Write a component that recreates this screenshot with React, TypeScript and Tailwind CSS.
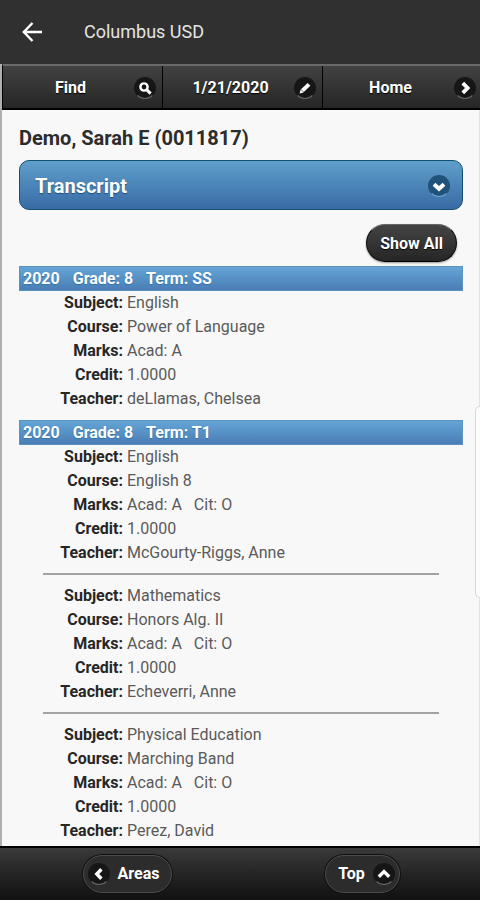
import type { ReactNode } from 'react'

interface CourseRecord {
  subject: string
  course: string
  marks: string[]
  credit: string
  teacher: string
}

interface Term {
  year: string
  grade: string
  term: string
  records: CourseRecord[]
}

const TERMS: Term[] = [
  {
    year: '2020',
    grade: '8',
    term: 'SS',
    records: [
      {
        subject: 'English',
        course: 'Power of Language',
        marks: ['Acad: A'],
        credit: '1.0000',
        teacher: 'deLlamas, Chelsea',
      },
    ],
  },
  {
    year: '2020',
    grade: '8',
    term: 'T1',
    records: [
      {
        subject: 'English',
        course: 'English 8',
        marks: ['Acad: A', 'Cit: O'],
        credit: '1.0000',
        teacher: 'McGourty-Riggs, Anne',
      },
      {
        subject: 'Mathematics',
        course: 'Honors Alg. II',
        marks: ['Acad: A', 'Cit: O'],
        credit: '1.0000',
        teacher: 'Echeverri, Anne',
      },
      {
        subject: 'Physical Education',
        course: 'Marching Band',
        marks: ['Acad: A', 'Cit: O'],
        credit: '1.0000',
        teacher: 'Perez, David',
      },
    ],
  },
]

const ICON_PATHS = {
  search: (
    <>
      <circle cx="8" cy="8" r="3.6" strokeWidth="2.4" />
      <path d="M10.6 10.6 14.6 14.6" strokeWidth="3" />
    </>
  ),
  edit: (
    <>
      <path d="M6.4 11.6 13 5.4" strokeWidth="4" />
      <path d="M3.6 14.6 4.6 10.6 7.6 13.6Z" fill="currentColor" stroke="none" />
    </>
  ),
  left: <path d="M11.4 4.2 6.8 9 11.4 13.8" strokeWidth="3.4" />,
  right: <path d="M6.8 4.2 11.6 9 6.8 13.8" strokeWidth="3.8" />,
  up: <path d="M3.8 11.8 9 6.6 14.2 11.8" strokeWidth="3.4" />,
  down: <path d="M4 7.2 9 11.8 14 7.2" strokeWidth="4" />,
}

function RoundIcon({ name, className = 'bg-[#161616] border-b-[#666]' }: { name: keyof typeof ICON_PATHS; className?: string }) {
  return (
    <span className={`flex size-[22px] shrink-0 items-center justify-center rounded-full border border-transparent ${className}`}>
      <svg className="size-[18px] text-white" viewBox="0 0 18 18" fill="none" stroke="currentColor" aria-hidden="true">
        {ICON_PATHS[name]}
      </svg>
    </span>
  )
}

function NavButton({ label, icon }: { label: string; icon: keyof typeof ICON_PATHS }) {
  return (
    <button className="flex h-full flex-1 items-center border-r border-black bg-linear-to-b from-[#424242] to-[#262626] pt-[2px] pr-[6px] pl-1 last:border-r-0 last:pr-1">
      <span className="flex-1 text-center [text-shadow:0_1px_1px_#000]">{label}</span>
      <RoundIcon name={icon} />
    </button>
  )
}

function Field({ label, children }: { label: string; children: ReactNode }) {
  return (
    <div className="flex gap-1">
      <dt className="w-[104px] shrink-0 text-right font-bold text-[#262626]">{label}:</dt>
      <dd className="flex gap-3 text-[#5a5a5a]">{children}</dd>
    </div>
  )
}

function Course({ record }: { record: CourseRecord }) {
  return (
    <dl className="text-base leading-6">
      <Field label="Subject">{record.subject}</Field>
      <Field label="Course">{record.course}</Field>
      <Field label="Marks">
        {record.marks.map((mark) => (
          <span key={mark}>{mark}</span>
        ))}
      </Field>
      <Field label="Credit">{record.credit}</Field>
      <Field label="Teacher">{record.teacher}</Field>
    </dl>
  )
}

function TermSection({ term }: { term: Term }) {
  return (
    <section>
      <h3 className="flex h-[25px] items-center gap-[13px] border border-[#5b93c0] bg-linear-to-b from-[#64a5d6] to-[#4a7db5] px-[3px] text-base font-bold text-white [text-shadow:0_1px_1px_#3373a5]">
        <span>{term.year}</span>
        <span>Grade: {term.grade}</span>
        <span>Term: {term.term}</span>
      </h3>
      {term.records.map((record, i) => (
        <div key={record.subject}>
          {i > 0 && <hr className="mx-6 mt-2 mb-[9px] border-t-2 border-[#a3a3a3]" />}
          <Course record={record} />
        </div>
      ))}
    </section>
  )
}

export default function App() {
  return (
    <div className="relative flex min-h-screen flex-col bg-[#f8f8f8] font-[Roboto,sans-serif]">
      {/* App bar */}
      <header className="flex h-16 shrink-0 items-center gap-10 bg-[#303030] px-5">
        <button aria-label="Back" className="text-white">
          <svg className="size-6" viewBox="0 0 24 24" fill="none" stroke="currentColor" strokeWidth="2.4" aria-hidden="true">
            <path d="M22 12H4.5M12.5 3 3.8 12l8.7 9" />
          </svg>
        </button>
        <h1 className="text-lg text-[#e4e4e4]">Columbus USD</h1>
      </header>

      <div className="flex flex-1 flex-col border-l-2 border-[#b0b0b0]">
        <nav className="flex h-[46px] shrink-0 border-t-2 border-b-2 border-t-[#6a6a6a] border-b-black border-l border-l-black text-base font-bold text-white">
          <NavButton label="Find" icon="search" />
          <NavButton label="1/21/2020" icon="edit" />
          <NavButton label="Home" icon="right" />
        </nav>

        <main className="flex-1 border-r border-[#e2e2e2] pr-4 pl-[17px]">
          <h2 className="mt-4 text-xl leading-6 font-bold text-[#2c2c2c]">Demo, Sarah E (0011817)</h2>

          <button className="mt-[10px] flex h-[50px] w-full items-center justify-between rounded-[10px] border border-[#145072] bg-linear-to-b from-[#5f9fcb] to-[#396ba5] pt-[2px] pr-3 pl-[15px] text-xl font-bold text-white [text-shadow:0_1px_1px_#194b7e]">
            Transcript
            <RoundIcon name="down" className="bg-[#20527c] border-b-[#6ea5d0]" />
          </button>

          <div className="mt-[14px] flex justify-end pr-[6px]">
            <button className="h-[38px] rounded-full border border-t-[#666] border-black bg-linear-to-b from-[#444] to-[#262626] px-[13px] pt-[2px] text-base font-bold text-white shadow-[0_1px_2px_#0006] [text-shadow:0_1px_1px_#000]">
              Show All
            </button>
          </div>

          <div className="mt-1 flex flex-col gap-[9px]">
            {TERMS.map((term) => (
              <TermSection key={term.term} term={term} />
            ))}
          </div>
        </main>
      </div>

      <footer className="sticky bottom-0 flex h-[54px] shrink-0 items-center border-t-2 border-black bg-linear-to-b from-[#3a3a3a] to-[#111] text-base font-bold text-white [text-shadow:0_1px_1px_#000]">
        <div className="flex flex-1 justify-center pl-[10px]">
          <button className="flex h-[38px] items-center gap-2 rounded-full border border-[#4c4c4c] bg-[#2c2c2c] pr-3 pl-1 shadow-[0_0_0_1px_#111]">
            <RoundIcon name="left" />
            Areas
          </button>
        </div>
        <div className="flex flex-1 justify-center">
          <button className="flex h-[38px] items-center gap-2 rounded-full border border-[#4c4c4c] bg-[#2c2c2c] pr-1 pl-3 shadow-[0_0_0_1px_#111]">
            Top
            <RoundIcon name="up" />
          </button>
        </div>
      </footer>

      {/* Edge panel handle */}
      <div className="absolute top-[406px] right-0 h-[192px] w-[5px] rounded-l-[5px] border border-r-0 border-[#d8d8d8] bg-[#fcfcfc]" />
    </div>
  )
}
